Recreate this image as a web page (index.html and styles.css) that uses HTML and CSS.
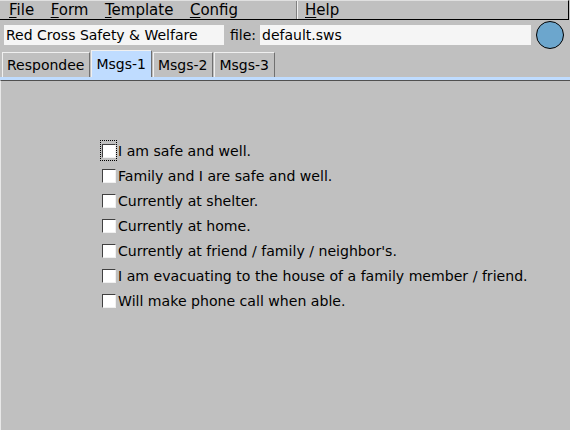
FILE: index.html
```html
<!DOCTYPE html>
<html>
<head>
<meta charset="utf-8">
<link rel="stylesheet" href="styles.css">
</head>
<body>
<div class="app">
  <div class="menubar">
    <div class="menu-left">
      <span class="menu"><u>F</u>ile</span>
      <span class="menu"><u>F</u>orm</span>
      <span class="menu"><u>T</u>emplate</span>
      <span class="menu"><u>C</u>onfig</span>
    </div>
    <span class="menu-sep"></span>
    <span class="menu m-help"><u>H</u>elp</span>
  </div>
  <div class="header">
    <div class="field title-field">Red Cross Safety &amp; Welfare</div>
    <span class="label">file:</span>
    <div class="field file-field">default.sws</div>
    <span class="status-dot"></span>
  </div>
  <div class="tabs">
    <span class="tab">Respondee</span>
    <span class="tab active">Msgs-1</span>
    <span class="tab">Msgs-2</span>
    <span class="tab">Msgs-3</span>
  </div>
  <div class="panel">
    <ul class="checklist">
      <li class="item focused"><span class="box"></span><span class="text">I am safe and well.</span></li>
      <li class="item"><span class="box"></span><span class="text">Family and I are safe and well.</span></li>
      <li class="item"><span class="box"></span><span class="text">Currently at shelter.</span></li>
      <li class="item"><span class="box"></span><span class="text">Currently at home.</span></li>
      <li class="item"><span class="box"></span><span class="text">Currently at friend / family / neighbor's.</span></li>
      <li class="item"><span class="box"></span><span class="text">I am evacuating to the house of a family member / friend.</span></li>
      <li class="item"><span class="box"></span><span class="text">Will make phone call when able.</span></li>
    </ul>
  </div>
</div>
</body>
</html>
```
FILE: styles.css
```css
html, body {
  margin: 0;
  padding: 0;
  background: #c0c0c0;
}
body {
  font-family: "DejaVu Sans", sans-serif;
  font-size: 14px;
  color: #000;
  width: 570px;
  height: 430px;
  overflow: hidden;
}
.app {
  display: flex;
  flex-direction: column;
  height: 430px;
}
.menubar {
  display: flex;
  align-items: center;
  height: 18px;
  border-top: 1px solid #e0e0e0;
  border-bottom: 1px solid #000;
  border-right: 1px solid #000;
  margin-right: 1px;
  padding-left: 9px;
}
.menu-left {
  display: flex;
  gap: 16.5px;
  width: 287px;
}
.menu {
  font-size: 15px;
  line-height: 18px;
  white-space: nowrap;
}
.menu u {
  text-decoration-thickness: 1px;
  text-underline-offset: 2px;
}
.menu-sep {
  align-self: stretch;
  width: 0;
  border-left: 1px solid #808080;
  border-right: 1px solid #f0f0f0;
  margin-right: 7px;
}
.header {
  display: flex;
  align-items: center;
  height: 29px;
  padding: 0 6px 0 4px;
}
.field {
  background: #f5f5f5;
  height: 20px;
  line-height: 20px;
  padding-left: 2px;
  white-space: nowrap;
  overflow: hidden;
}
.title-field { width: 218px; }
.label { margin-left: 6px; margin-right: 4px; }
.file-field { width: 269px; }
.status-dot {
  width: 28px;
  height: 28px;
  border-radius: 50%;
  background: #6ca6cd;
  border: 1px solid #000;
  margin-left: 5px;
  box-sizing: border-box;
}
.tabs {
  display: flex;
  align-items: flex-end;
  padding: 2px 0 0 2px;
  gap: 1px;
  border-bottom: 3px solid #bfdcff;
  height: 26px;
}
.tab {
  height: 24px;
  line-height: 24px;
  padding: 0 5px 0 4px;
  border-top: 1px solid #f0f0f0;
  border-left: 1px solid #f0f0f0;
  border-right: 1px solid #707070;
  background: #c0c0c0;
}
.tab.active {
  height: 26px;
  line-height: 26px;
  background: #bfdcff;
}
.panel {
  flex: 1;
  border-top: 1px solid #505050;
  border-left: 1px solid #e8e8e8;
  padding: 59px 0 0 101px;
}
.checklist {
  list-style: none;
  margin: 0;
  padding: 0;
  display: flex;
  flex-direction: column;
  gap: 4px;
}
.item {
  display: flex;
  align-items: center;
  height: 21px;
  position: relative;
}
.box {
  width: 14px;
  height: 14px;
  background: #fff;
  border-top: 1px solid #404040;
  border-left: 1px solid #404040;
  border-right: 1px solid #f0f0f0;
  border-bottom: 1px solid #f0f0f0;
  margin-right: 2px;
  box-sizing: border-box;
}
.text {
  font-size: 14.1px;
}
.item.focused::before {
  content: "";
  position: absolute;
  left: -2px;
  top: 0;
  width: 17px;
  height: 21px;
  border: 1px dotted #000;
  box-sizing: border-box;
}
```
